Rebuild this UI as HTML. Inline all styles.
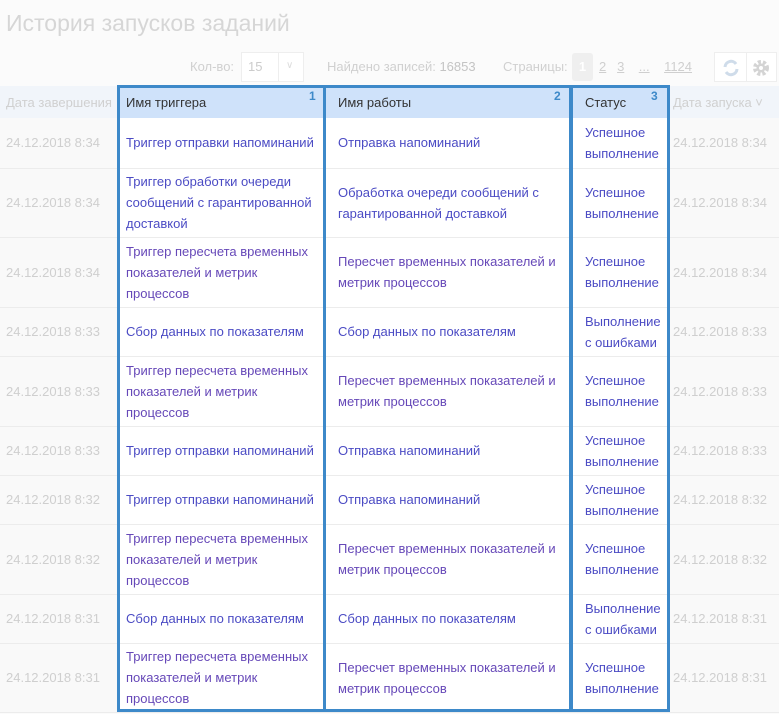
<!DOCTYPE html>
<html><head><meta charset="utf-8"><style>
*{margin:0;padding:0;box-sizing:border-box}
body{width:779px;height:714px;background:#fbfbfb;font-family:"Liberation Sans",sans-serif;font-size:13px;position:relative;overflow:hidden}
.t{position:absolute;left:6px;top:10px;font-size:23px;color:#d6d6d6}
.tb{position:absolute;top:52px;height:30px;color:#d0d0d0;font-size:13px;line-height:30px}
table{position:absolute;left:0;top:86px;width:779px;border-collapse:collapse;table-layout:fixed}
td{border-bottom:1px solid #ececec;vertical-align:middle;line-height:21px;padding:0 6px}
td.d{color:#cfcfcf;background:#f9f9f9}
td.l{color:#4b4bc4;background:#fff;padding-left:8px}
td.l.p{color:#6648b8}
tr.h td{height:32px;background:#f1f5fa;color:#d0d0d0;border-bottom:none}
tr.h td.l{background:#cfe2fa;color:#333}
td.s{padding-left:14px}
.box{position:absolute;top:85px;height:627px;border:3px solid #3d89c9}
.n{position:absolute;top:89px;color:#3d89c9;font-size:12px;font-weight:bold}
.u{text-decoration:underline;color:#cfcfcf}
</style></head><body>
<div class="t">История запусков заданий</div>
<div class="tb" style="left:190px">Кол-во:</div>
<div style="position:absolute;left:241px;top:52px;width:63px;height:30px;border:1px solid #eee;background:#fff;color:#ccc;line-height:28px;padding-left:6px">15<span style="position:absolute;left:36px;top:0;width:1px;height:28px;background:#eee"></span><span style="position:absolute;left:44px;top:-1px;color:#ddd;font-size:10px">&#8744;</span></div>
<div class="tb" style="left:327px">Найдено записей: <span style="color:#c4c4c4">16853</span></div>
<div class="tb" style="left:503px">Страницы:</div>
<div style="position:absolute;left:572px;top:53px;width:21px;height:28px;background:#efefef;border-radius:3px;color:#fff;font-weight:bold;text-align:center;line-height:28px">1</div>
<div class="tb" style="left:599px"><span class="u">2</span>&nbsp;&nbsp;&nbsp;<span class="u">3</span>&nbsp;&nbsp;&nbsp;&nbsp;<span class="u">...</span>&nbsp;&nbsp;&nbsp;&nbsp;<span class="u">1124</span></div>
<div style="position:absolute;left:714px;top:52px;width:63px;height:30px;border:1px solid #eee;background:#fff"><span style="position:absolute;left:31px;top:0;width:1px;height:28px;background:#eee"></span>
<svg style="position:absolute;left:6px;top:5px" width="20" height="20" viewBox="0 0 20 20"><path d="M4 9a6 6 0 0 1 11-3M16 11a6 6 0 0 1-11 3" stroke="#cfdcea" stroke-width="3" fill="none"/></svg>
<svg style="position:absolute;left:36px;top:5px" width="20" height="20" viewBox="0 0 20 20"><circle cx="10" cy="10" r="6" fill="none" stroke="#d4d4d4" stroke-width="4" stroke-dasharray="3 2"/><circle cx="10" cy="10" r="4.5" fill="#d4d4d4"/><circle cx="10" cy="10" r="2" fill="#fff"/></svg></div>
<table>
<colgroup><col style="width:118px"><col style="width:206px"><col style="width:247px"><col style="width:98px"><col style="width:110px"></colgroup>
<tr class="h"><td class="d">Дата завершения</td><td class="l">Имя триггера</td><td class="l" style="padding-left:14px">Имя работы</td><td class="l s">Статус</td><td class="d" style="padding-left:4px">Дата запуска ˅</td></tr>
<tr style="height:50px"><td class="d">24.12.2018 8:34</td><td class="l">Триггер отправки напоминаний</td><td class="l" style="padding-left:14px">Отправка напоминаний</td><td class="l s">Успешное выполнение</td><td class="d" style="padding-left:4px">24.12.2018 8:34</td></tr>
<tr style="height:69px"><td class="d">24.12.2018 8:34</td><td class="l">Триггер обработки очереди сообщений с гарантированной доставкой</td><td class="l" style="padding-left:14px">Обработка очереди сообщений с гарантированной доставкой</td><td class="l s">Успешное выполнение</td><td class="d" style="padding-left:4px">24.12.2018 8:34</td></tr>
<tr style="height:70px"><td class="d">24.12.2018 8:34</td><td class="l p">Триггер пересчета временных показателей и метрик процессов</td><td class="l p" style="padding-left:14px">Пересчет временных показателей и метрик процессов</td><td class="l s">Успешное выполнение</td><td class="d" style="padding-left:4px">24.12.2018 8:34</td></tr>
<tr style="height:49px"><td class="d">24.12.2018 8:33</td><td class="l">Сбор данных по показателям</td><td class="l" style="padding-left:14px">Сбор данных по показателям</td><td class="l s">Выполнение с ошибками</td><td class="d" style="padding-left:4px">24.12.2018 8:33</td></tr>
<tr style="height:70px"><td class="d">24.12.2018 8:33</td><td class="l p">Триггер пересчета временных показателей и метрик процессов</td><td class="l p" style="padding-left:14px">Пересчет временных показателей и метрик процессов</td><td class="l s">Успешное выполнение</td><td class="d" style="padding-left:4px">24.12.2018 8:33</td></tr>
<tr style="height:49px"><td class="d">24.12.2018 8:33</td><td class="l">Триггер отправки напоминаний</td><td class="l" style="padding-left:14px">Отправка напоминаний</td><td class="l s">Успешное выполнение</td><td class="d" style="padding-left:4px">24.12.2018 8:33</td></tr>
<tr style="height:49px"><td class="d">24.12.2018 8:32</td><td class="l">Триггер отправки напоминаний</td><td class="l" style="padding-left:14px">Отправка напоминаний</td><td class="l s">Успешное выполнение</td><td class="d" style="padding-left:4px">24.12.2018 8:32</td></tr>
<tr style="height:70px"><td class="d">24.12.2018 8:32</td><td class="l p">Триггер пересчета временных показателей и метрик процессов</td><td class="l p" style="padding-left:14px">Пересчет временных показателей и метрик процессов</td><td class="l s">Успешное выполнение</td><td class="d" style="padding-left:4px">24.12.2018 8:32</td></tr>
<tr style="height:49px"><td class="d">24.12.2018 8:31</td><td class="l">Сбор данных по показателям</td><td class="l" style="padding-left:14px">Сбор данных по показателям</td><td class="l s">Выполнение с ошибками</td><td class="d" style="padding-left:4px">24.12.2018 8:31</td></tr>
<tr style="height:69px"><td class="d">24.12.2018 8:31</td><td class="l p">Триггер пересчета временных показателей и метрик процессов</td><td class="l p" style="padding-left:14px">Пересчет временных показателей и метрик процессов</td><td class="l s">Успешное выполнение</td><td class="d" style="padding-left:4px">24.12.2018 8:31</td></tr>
</table>
<div class="box" style="left:117px;width:209px"></div>
<div class="box" style="left:323px;width:250px"></div>
<div class="box" style="left:569px;width:101px"></div>
<div class="n" style="left:309px">1</div>
<div class="n" style="left:554px">2</div>
<div class="n" style="left:651px">3</div>
</body></html>
